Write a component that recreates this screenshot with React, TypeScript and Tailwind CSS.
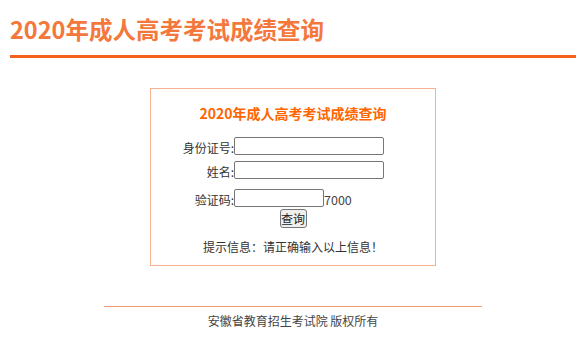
import React from "react";

const font = { fontFamily: '"Noto Sans CJK SC", "Noto Sans", sans-serif' };

export default function App() {
  return (
    <div className="w-full overflow-hidden bg-white" style={font}>
      <div className="w-[586px]">
        <div className="mx-[10px]">
          <h1 className="pt-[13px] text-[23.5px] leading-[32px] font-bold text-[#f4773b]">
            2020年成人高考考试成绩查询
          </h1>
          <div className="mt-[10px] h-[3px] bg-[#f5621c]" />
        </div>

        <div className="mx-auto mt-[30px] w-[286px] border border-[#f9b08f] pb-[8px] text-[#333]">
          <div className="mt-[14px] text-center text-[14px] leading-[20px] font-bold text-[#ff6600]">
            2020年成人高考考试成绩查询
          </div>

          <div className="mt-[14px] flex h-[18px] items-end">
            <label className="w-[83px] text-right text-[12px] leading-[14px]">身份证号:</label>
            <input className="h-[18px] w-[150px] rounded-[2px] border border-[#767676] bg-white" />
          </div>
          <div className="mt-[6px] flex h-[18px] items-end">
            <label className="w-[83px] text-right text-[12px] leading-[14px]">姓名:</label>
            <input className="h-[18px] w-[150px] rounded-[2px] border border-[#767676] bg-white" />
          </div>
          <div className="mt-[10px] flex h-[18px] items-end">
            <label className="w-[83px] text-right text-[12px] leading-[14px]">验证码:</label>
            <input className="h-[18px] w-[90px] rounded-[2px] border border-[#767676] bg-white" />
            <span className="text-[12.5px] leading-[14px] text-[#444]">7000</span>
          </div>
          <div className="mt-[2px] flex justify-center">
            <button className="h-[19px] w-[27px] rounded-[3px] border border-[#767676] bg-[#efefef] p-0 text-[12px] leading-[14px] text-[#222]">
              查询
            </button>
          </div>
          <div className="mt-[9px] text-center text-[12px] leading-[20px] text-[#333]">
            提示信息：请正确输入以上信息！
          </div>
        </div>

        <div className="mx-auto mt-[40px] h-px w-[378px] bg-[#f29a6e]" />
        <div className="mt-[4px] text-center text-[12px] leading-[20px] text-[#444]">
          安徽省教育招生考试院 版权所有
        </div>
      </div>
    </div>
  );
}
